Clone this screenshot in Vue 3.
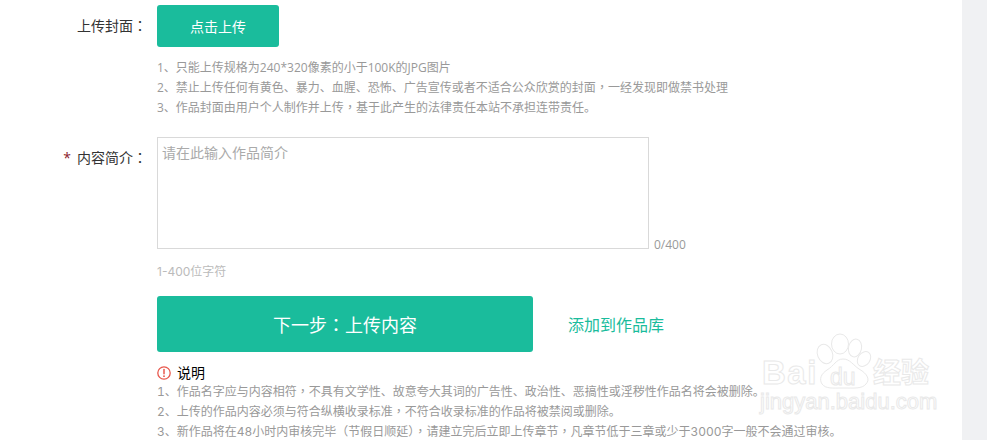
<script setup>
const coverHints = [
  '1、只能上传规格为240*320像素的小于100K的JPG图片',
  '2、禁止上传任何有黄色、暴力、血腥、恐怖、广告宣传或者不适合公众欣赏的封面，一经发现即做禁书处理',
  '3、作品封面由用户个人制作并上传，基于此产生的法律责任本站不承担连带责任。',
]
const notes = [
  '1、作品名字应与内容相符，不具有文学性、故意夸大其词的广告性、政治性、恶搞性或淫秽性作品名将会被删除。',
  '2、上传的作品内容必须与符合纵横收录标准，不符合收录标准的作品将被禁阅或删除。',
  '3、新作品将在48小时内审核完毕（节假日顺延），请建立完后立即上传章节，凡章节低于三章或少于3000字一般不会通过审核。',
]
// 逗号和冒号要居中，单独换 TC 字形
const parts = (s) => s.split('，')
</script>

<template>
  <div class="page">
    <main class="form">
      <section class="row row-cover">
        <label class="label">上传封面<span class="mid">：</span></label>
        <div class="field">
          <button class="upload-btn" type="button">点击上传</button>
          <ul class="hints">
            <li v-for="h in coverHints" :key="h">
              <template v-for="(p, i) in parts(h)" :key="i"><span v-if="i" class="mid">，</span>{{ p }}</template>
            </li>
          </ul>
        </div>
      </section>

      <section class="row row-intro">
        <label class="label"><span class="star">*</span>内容简介<span class="mid">：</span></label>
        <div class="field">
          <div class="intro-box">
            <textarea class="intro" placeholder="请在此输入作品简介"></textarea>
            <span class="count">0/400</span>
          </div>
          <p class="limit">1-400位字符</p>
        </div>
      </section>

      <section class="row row-actions">
        <div class="field actions">
          <button class="next-btn" type="button">下一步<span class="mid">：</span>上传内容</button>
          <a class="lib-link">添加到作品库</a>
        </div>
      </section>

      <section class="row row-notes">
        <div class="field">
          <div class="notes-title">
            <svg class="warn" viewBox="0 0 14 14" width="14" height="14">
              <circle cx="7" cy="7" r="6.2" fill="none" stroke="#e8584d" stroke-width="1.3" />
              <path d="M7 3.4v4.4" stroke="#e8584d" stroke-width="1.5" stroke-linecap="round" />
              <circle cx="7" cy="10.2" r="0.9" fill="#e8584d" />
            </svg>
            <span>说明</span>
          </div>
          <ul class="hints notes">
            <li v-for="n in notes" :key="n">
              <template v-for="(p, i) in parts(n)" :key="i"><span v-if="i" class="mid">，</span>{{ p }}</template>
            </li>
          </ul>
        </div>
      </section>

      <!-- 百度经验水印 -->
      <svg class="watermark" viewBox="0 0 190 90" width="190" height="90">
        <g fill="#fff" fill-opacity="0.75" stroke="#e9e9e9" stroke-width="1">
          <ellipse cx="75" cy="24" rx="7.5" ry="10" transform="rotate(-22 75 24)" />
          <ellipse cx="90" cy="14" rx="8.5" ry="10" />
          <ellipse cx="105" cy="18" rx="6.5" ry="9" transform="rotate(12 105 18)" />
          <ellipse cx="114" cy="29" rx="6" ry="8" transform="rotate(35 114 29)" />
          <path d="M93 29c7 0 10 6 16 10 9 5 11 11 7 15-4 5-12 4-23 4s-17 1-21-4c-3-5-1-10 5-14 7-4 9-11 16-11z" />
          <text x="12" y="54" class="wm-latin">Bai</text>
          <text x="80" y="55" class="wm-du">du</text>
          <text x="123" y="53" class="wm-cn">经验</text>
          <text x="10" y="79" class="wm-url">jingyan.baidu.com</text>
        </g>
      </svg>
    </main>
    <aside class="side"></aside>
  </div>
</template>

<style scoped>
.page {
  display: flex;
  height: 440px;
  overflow: hidden;
  background: #fff;
  font-family: "Open Sans", "Noto Sans CJK SC", sans-serif;
}
.form {
  position: relative;
  flex: 1;
  min-width: 0;
}
.side {
  width: 25px;
  background: #f0f1f3;
}
.row {
  display: flex;
  padding-left: 157px;
}
.row-cover {
  padding-top: 5px;
}
.row-intro {
  margin-top: 19px;
}
.row-actions {
  margin-top: 15px;
}
.row-notes {
  margin-top: 14px;
}
.mid {
  font-family: "Noto Sans CJK TC", sans-serif;
  line-height: 0;
}
.label {
  width: 147px;
  margin-left: -157px;
  margin-right: 10px;
  flex: none;
  text-align: right;
  font-size: 14px;
  line-height: 42px;
  color: #333;
  white-space: nowrap;
}
.star {
  margin-right: 6px;
  color: #8b1a2b;
  font-size: 14px;
}
.field {
  flex: 1;
  min-width: 0;
}
.upload-btn {
  display: block;
  width: 122px;
  height: 42px;
  border: 0;
  border-radius: 3px;
  background: #1abc9c;
  color: #fff;
  font: inherit;
  font-size: 14px;
}
.hints {
  margin: 0;
  padding: 0;
  list-style: none;
  font-size: 12px;
  line-height: 20px;
  color: #999;
  white-space: nowrap;
}
.row-cover .hints {
  margin-top: 11px;
}
.intro-box {
  display: flex;
  align-items: flex-end;
}
.intro {
  display: block;
  box-sizing: border-box;
  width: 492px;
  height: 112px;
  padding: 5px 4px;
  border: 1px solid #d9d9d9;
  outline: none;
  resize: none;
  font: inherit;
  font-size: 14px;
  line-height: 20px;
  color: #333;
}
.intro::placeholder {
  color: #aaa;
}
.count {
  margin-left: 5px;
  margin-bottom: -2px;
  font-size: 12px;
  line-height: 12px;
  color: #999;
}
.limit {
  margin: 14px 0 0;
  font-family: "Inter", "Noto Sans CJK SC", sans-serif;
  font-size: 12px;
  line-height: 18px;
  color: #bbb;
}
.actions {
  display: flex;
  align-items: center;
}
.next-btn {
  width: 376px;
  height: 56px;
  border: 0;
  border-radius: 3px;
  background: #1abc9c;
  color: #fff;
  font: inherit;
  font-size: 18px;
}
.lib-link {
  margin-left: 35px;
  font-size: 16px;
  color: #1abc9c;
}
.notes-title {
  display: flex;
  align-items: center;
  gap: 6px;
  font-size: 14px;
  line-height: 14px;
  color: #000;
}
.notes {
  margin-top: 2px;
  font-family: "Inter", "Noto Sans CJK SC", sans-serif;
  font-variant-numeric: tabular-nums;
}
.watermark {
  position: absolute;
  left: 750px;
  top: 330px;
  pointer-events: none;
}
.wm-latin {
  font-family: "Liberation Sans", sans-serif;
  font-size: 33px;
  font-weight: 700;
  letter-spacing: 1.5px;
}
.wm-du {
  font-family: "Liberation Sans", sans-serif;
  font-size: 23px;
}
.wm-cn {
  font-family: "Noto Sans CJK SC", sans-serif;
  font-size: 28px;
  font-weight: 700;
}
.wm-url {
  font-family: "Liberation Sans", sans-serif;
  font-size: 22px;
}
</style>
